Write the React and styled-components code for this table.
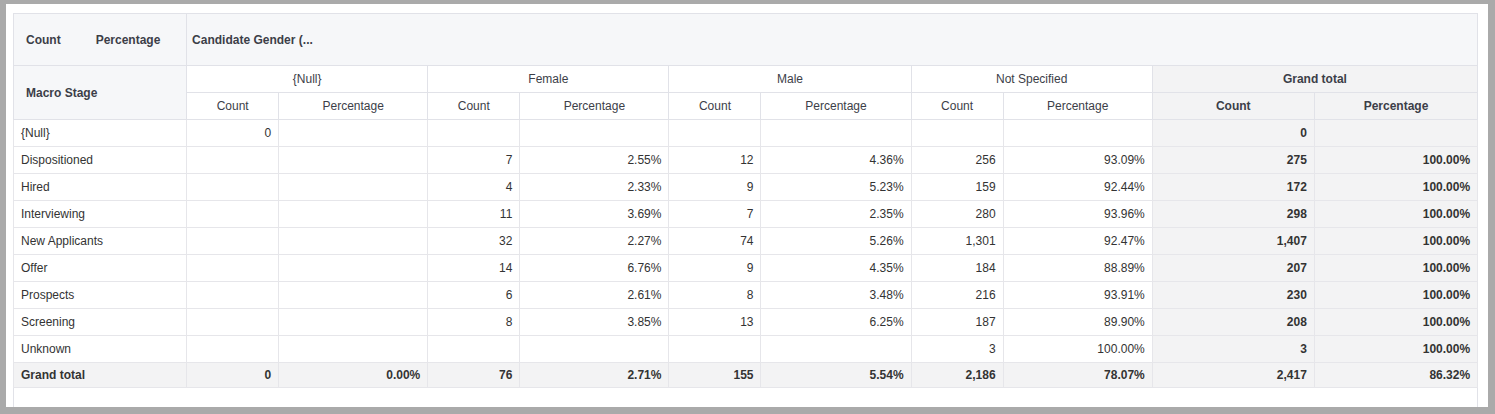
import React from "react";
import styled, { createGlobalStyle } from "styled-components";

const GlobalStyle = createGlobalStyle`
  html, body {
    margin: 0;
    padding: 0;
    background: #aaaaaa;
  }
  body {
    font-family: "Liberation Sans", Arial, sans-serif;
    font-size: 12px;
    color: #333333;
  }
`;

const Frame = styled.div`
  width: 1495px;
  height: 414px;
  box-sizing: border-box;
  padding: 4px 7px 7px 6px;
  display: flex;
  overflow: hidden;
`;

const Panel = styled.div`
  flex: 1;
  background: #ffffff;
  padding: 9px 12px 0 7px;
  display: flex;
  overflow: hidden;
`;

const Scroller = styled.div`
  flex: 1;
  border-left: 1px solid #e1e2e8;
  border-right: 1px solid #e1e2e8;
  box-sizing: border-box;
`;

const Table = styled.table`
  border-collapse: collapse;
  table-layout: fixed;
  margin-left: -1px;
  width: calc(100% + 2px);
`;

const HeadCell = styled.th`
  border: 1px solid #e1e2e8;
  background: ${p => (p.$total ? "#f3f3f4" : p.$tint ? "#f6f7f9" : "#ffffff")};
  color: #3c3e48;
  font-weight: ${p => (p.$bold ? 700 : 400)};
  text-align: ${p => p.$align || "center"};
  padding: 0 ${p => p.$pad || 7}px;
  height: ${p => p.$h || 26}px;
  white-space: nowrap;
  overflow: hidden;
  font-size: 12px;
`;

const Cell = styled.td`
  border: 1px solid #e6e6ea;
  background: ${p => (p.$total ? "#f3f3f4" : "#ffffff")};
  font-weight: ${p => (p.$bold ? 700 : 400)};
  color: #333333;
  text-align: ${p => (p.$label ? "left" : "right")};
  padding: 0 7px;
  height: ${p => p.$h || 26}px;
  white-space: nowrap;
`;

const Measures = styled.span`
  display: inline-flex;
  gap: 35px;
`;

const widths = [173, 92, 149, 92, 149, 92, 150, 92, 149, 162, 163];
const groups = ["{Null}", "Female", "Male", "Not Specified"];

const rows = [
  ["{Null}", "0", "", "", "", "", "", "", "", "0", ""],
  ["Dispositioned", "", "", "7", "2.55%", "12", "4.36%", "256", "93.09%", "275", "100.00%"],
  ["Hired", "", "", "4", "2.33%", "9", "5.23%", "159", "92.44%", "172", "100.00%"],
  ["Interviewing", "", "", "11", "3.69%", "7", "2.35%", "280", "93.96%", "298", "100.00%"],
  ["New Applicants", "", "", "32", "2.27%", "74", "5.26%", "1,301", "92.47%", "1,407", "100.00%"],
  ["Offer", "", "", "14", "6.76%", "9", "4.35%", "184", "88.89%", "207", "100.00%"],
  ["Prospects", "", "", "6", "2.61%", "8", "3.48%", "216", "93.91%", "230", "100.00%"],
  ["Screening", "", "", "8", "3.85%", "13", "6.25%", "187", "89.90%", "208", "100.00%"],
  ["Unknown", "", "", "", "", "", "", "3", "100.00%", "3", "100.00%"],
];

const grandTotal = ["Grand total", "0", "0.00%", "76", "2.71%", "155", "5.54%", "2,186", "78.07%", "2,417", "86.32%"];

function App() {
  return (
    <>
      <GlobalStyle />
      <Frame>
        <Panel>
          <Scroller>
            <Table>
              <colgroup>
                {widths.map((w, i) => (
                  <col key={i} style={{ width: w }} />
                ))}
              </colgroup>
              <thead>
                <tr>
                  <HeadCell $tint $bold $align="left" $pad={12} $h={51}>
                    <Measures>
                      <span>Count</span>
                      <span>Percentage</span>
                    </Measures>
                  </HeadCell>
                  <HeadCell $tint $bold $align="left" $pad={5} $h={51} colSpan={10}>
                    Candidate Gender (...
                  </HeadCell>
                </tr>
                <tr>
                  <HeadCell $tint $bold $align="left" $pad={12} rowSpan={2}>
                    Macro Stage
                  </HeadCell>
                  {groups.map(g => (
                    <HeadCell key={g} colSpan={2}>{g}</HeadCell>
                  ))}
                  <HeadCell $total $bold colSpan={2}>Grand total</HeadCell>
                </tr>
                <tr>
                  {groups.map(g => (
                    <React.Fragment key={g}>
                      <HeadCell>Count</HeadCell>
                      <HeadCell>Percentage</HeadCell>
                    </React.Fragment>
                  ))}
                  <HeadCell $total $bold>Count</HeadCell>
                  <HeadCell $total $bold>Percentage</HeadCell>
                </tr>
              </thead>
              <tbody>
                {rows.map(r => (
                  <tr key={r[0]}>
                    {r.map((v, i) => (
                      <Cell key={i} $label={i === 0} $total={i >= 9} $bold={i >= 9}>
                        {v}
                      </Cell>
                    ))}
                  </tr>
                ))}
                <tr>
                  {grandTotal.map((v, i) => (
                    <Cell key={i} $label={i === 0} $total $bold $h={24}>
                      {v}
                    </Cell>
                  ))}
                </tr>
              </tbody>
            </Table>
          </Scroller>
        </Panel>
      </Frame>
    </>
  );
}

export default App;
